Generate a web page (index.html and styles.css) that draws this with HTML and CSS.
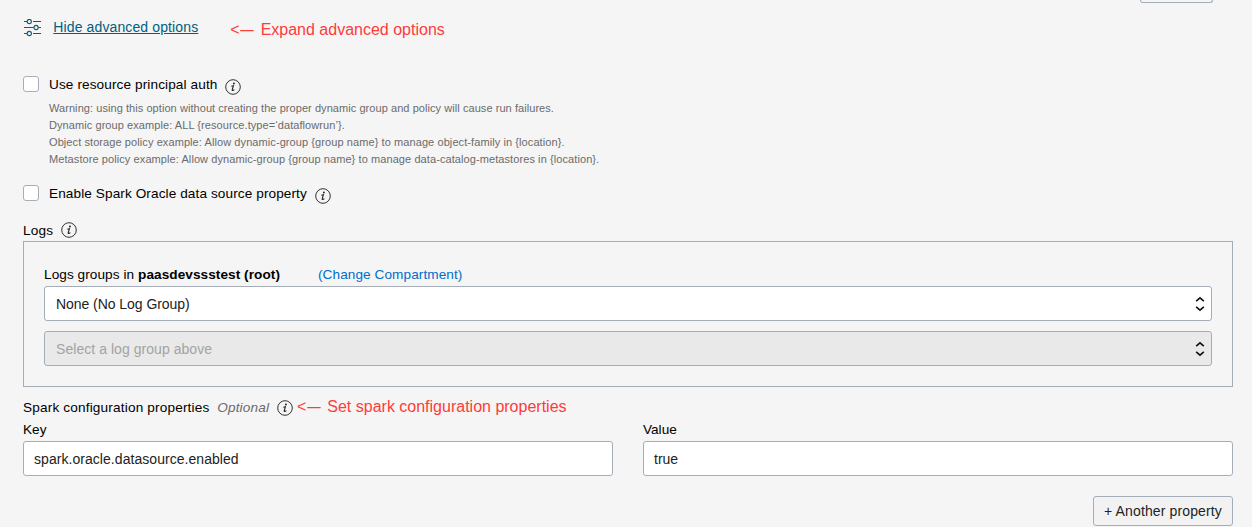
FILE: index.html
```html
<!DOCTYPE html>
<html lang="en">
<head>
<meta charset="utf-8">
<title>Advanced options</title>
<link rel="stylesheet" href="styles.css">
</head>
<body>
<svg class="defs" aria-hidden="true">
  <symbol id="info" viewBox="0 0 16 16">
    <circle cx="8" cy="8" r="7.3" fill="none" stroke="#333" stroke-width="1"/>
    <circle cx="8.9" cy="4.5" r="0.95" fill="#222"/>
    <path d="M6.3 7.2 L8.4 6.7 L7.2 10.9 Q7 12.2 9.4 10.6" fill="none" stroke="#222" stroke-width="1.1"/>
  </symbol>
  <symbol id="sort" viewBox="0 0 10 16">
    <path d="M1.2 5.2 L5 1.8 L8.8 5.2 M1.2 10.8 L5 14.2 L8.8 10.8" fill="none" stroke="#111" stroke-width="1.6"/>
  </symbol>
</svg>
<main class="page">
  <div class="top"><div class="cut-button"></div></div>
  <div class="toggle">
    <svg class="sliders" viewBox="0 0 17 18" fill="none" stroke="#145c78" stroke-width="1.1">
      <path d="M0 2.5H3M9 2.5H17M0 8.5H9.8M14.4 8.5H17M0 14.5H3M9 14.5H17"/>
      <circle cx="5.3" cy="2.5" r="2.1"/><circle cx="12.1" cy="8.5" r="2.1"/><circle cx="5.3" cy="14.5" r="2.1"/>
    </svg>
    <a class="t hide-link">Hide advanced options</a>
    <span class="t note note-expand">&lt;<span class="dash">—</span> Expand advanced options</span>
  </div>
  <div class="check">
    <span class="box"></span><span class="t label l-auth">Use resource principal auth</span>
    <svg class="info low"><use href="#info"/></svg>
  </div>
  <div class="hints">
    <div><span class="t h1">Warning: using this option without creating the proper dynamic group and policy will cause run failures.</span></div>
    <div><span class="t h2">Dynamic group example: ALL {resource.type=‘dataflowrun’}.</span></div>
    <div><span class="t h3">Object storage policy example: Allow dynamic-group {group name} to manage object-family in {location}.</span></div>
    <div><span class="t h4">Metastore policy example: Allow dynamic-group {group name} to manage data-catalog-metastores in {location}.</span></div>
  </div>
  <div class="check">
    <span class="box"></span><span class="t label l-spark">Enable Spark Oracle data source property</span>
    <svg class="info low"><use href="#info"/></svg>
  </div>
  <div class="logs-title"><span class="t label l-logs">Logs</span><svg class="info"><use href="#info"/></svg></div>
  <section class="panel">
    <div class="group-title"><span class="t l-group">Logs groups in <b>paasdevssstest (root)</b></span><a class="t change">(Change Compartment)</a></div>
    <div class="field select"><span class="t f-none">None (No Log Group)</span><svg class="sort"><use href="#sort"/></svg></div>
    <div class="field select disabled"><span class="t f-sel">Select a log group above</span><svg class="sort"><use href="#sort"/></svg></div>
  </section>
  <div class="config-title">
    <span class="t label l-conf">Spark configuration properties</span><i class="t label optional">Optional</i>
    <svg class="info"><use href="#info"/></svg><span class="t note note-set">&lt;<span class="dash">—</span> Set spark configuration properties</span>
  </div>
  <div class="pair">
    <div><div class="name"><span class="t">Key</span></div><div class="field"><span class="t f-key">spark.oracle.datasource.enabled</span></div></div>
    <div><div class="name"><span class="t">Value</span></div><div class="field"><span class="t">true</span></div></div>
  </div>
  <div class="actions"><button class="add"><span class="t">+ Another property</span></button></div>
</main>
</body>
</html>
```
FILE: styles.css
```css
* { box-sizing: border-box; }
body { margin: 0; background: #f5f5f5; color: #000; font: 13.6px/16px "Liberation Sans", Arial, sans-serif; overflow: hidden; }
.defs { display: none; }
.page { width: 1210px; height: 527px; margin-left: 23px; overflow: hidden; }
.t { white-space: nowrap; }
.top { height: 17px; display: flex; justify-content: flex-end; padding-right: 20px; }
.cut-button { width: 73px; height: 3px; border: 1px solid #a5adb8; border-top: 0; border-radius: 0 0 3px 3px; }
.toggle { display: flex; height: 59px; align-items: flex-start; }
.sliders { width: 17px; height: 18px; flex: none; margin: 2px 12.3px 0 1px; }
.hide-link { color: #00607f; font-size: 14px; line-height: 20px; letter-spacing: .12px; text-decoration: underline; }
.note { color: #ff3b3b; font-size: 16px; }
.note-expand { margin-left: 32px; line-height: 25px; }
.dash { display: inline-block; transform: scaleX(.84); margin: 0 .9px 0 -.3px; }
.check { display: flex; height: 24px; }
.label { padding-top: 1px; }
.l-auth { letter-spacing: .11px; }
.l-spark { letter-spacing: .1px; }
.l-logs { letter-spacing: .15px; }
.l-group { letter-spacing: .07px; }
.l-conf { letter-spacing: .17px; }
.box { width: 16px; height: 16px; flex: none; background: #fff; border: 1px solid #a5adb8; border-radius: 3px; margin-right: 10px; }
.info { width: 16px; height: 16px; flex: none; margin-left: 7.7px; }
.low { margin-top: 3px; }
.hints { margin-left: 26px; height: 85px; color: #6b6b6b; font-size: 11px; line-height: 17px; }
.h1 { letter-spacing: .062px; }
.h2 { letter-spacing: .075px; }
.h3, .h4 { letter-spacing: .085px; }
.logs-title { display: flex; height: 32px; padding-top: 13px; }
.panel { height: 146px; border: 1px solid #a5adb8; padding: 24px 20px 0; }
.group-title { display: flex; height: 20px; padding-top: 1px; }
.change { color: #006dcc; margin-left: 38px; letter-spacing: .08px; }
.field { height: 35px; border: 1px solid #a5adb8; border-radius: 3px; background: #fff; color: #222; font-size: 14px; line-height: 34px; padding-left: 10px; }
.select { display: flex; justify-content: space-between; align-items: center; padding: 0 6px 0 11px; margin-bottom: 10px; }
.disabled { background: #e9e9e9; color: #a3a3a3; }
.f-none { letter-spacing: -.05px; }
.f-sel, .f-key { letter-spacing: .05px; }
.sort { width: 10px; height: 16px; }
.config-title { display: flex; height: 34px; padding-top: 12px; }
.config-title .info { margin-top: 1px; }
.optional { color: #6b6b6b; margin-left: 7.7px; letter-spacing: .18px; }
.note-set { margin-left: 4px; }
.pair { display: grid; grid-template-columns: 590px 590px; gap: 30px; }
.name { height: 20px; padding-top: 1px; }
.actions { display: flex; justify-content: flex-end; padding-top: 20px; }
.add { width: 140px; height: 30px; padding: 0; border: 1px solid #a5adb8; border-radius: 3px; background: #f2f2f2; color: #222; font: 14px/28px "Liberation Sans", Arial, sans-serif; letter-spacing: .13px; }
```
